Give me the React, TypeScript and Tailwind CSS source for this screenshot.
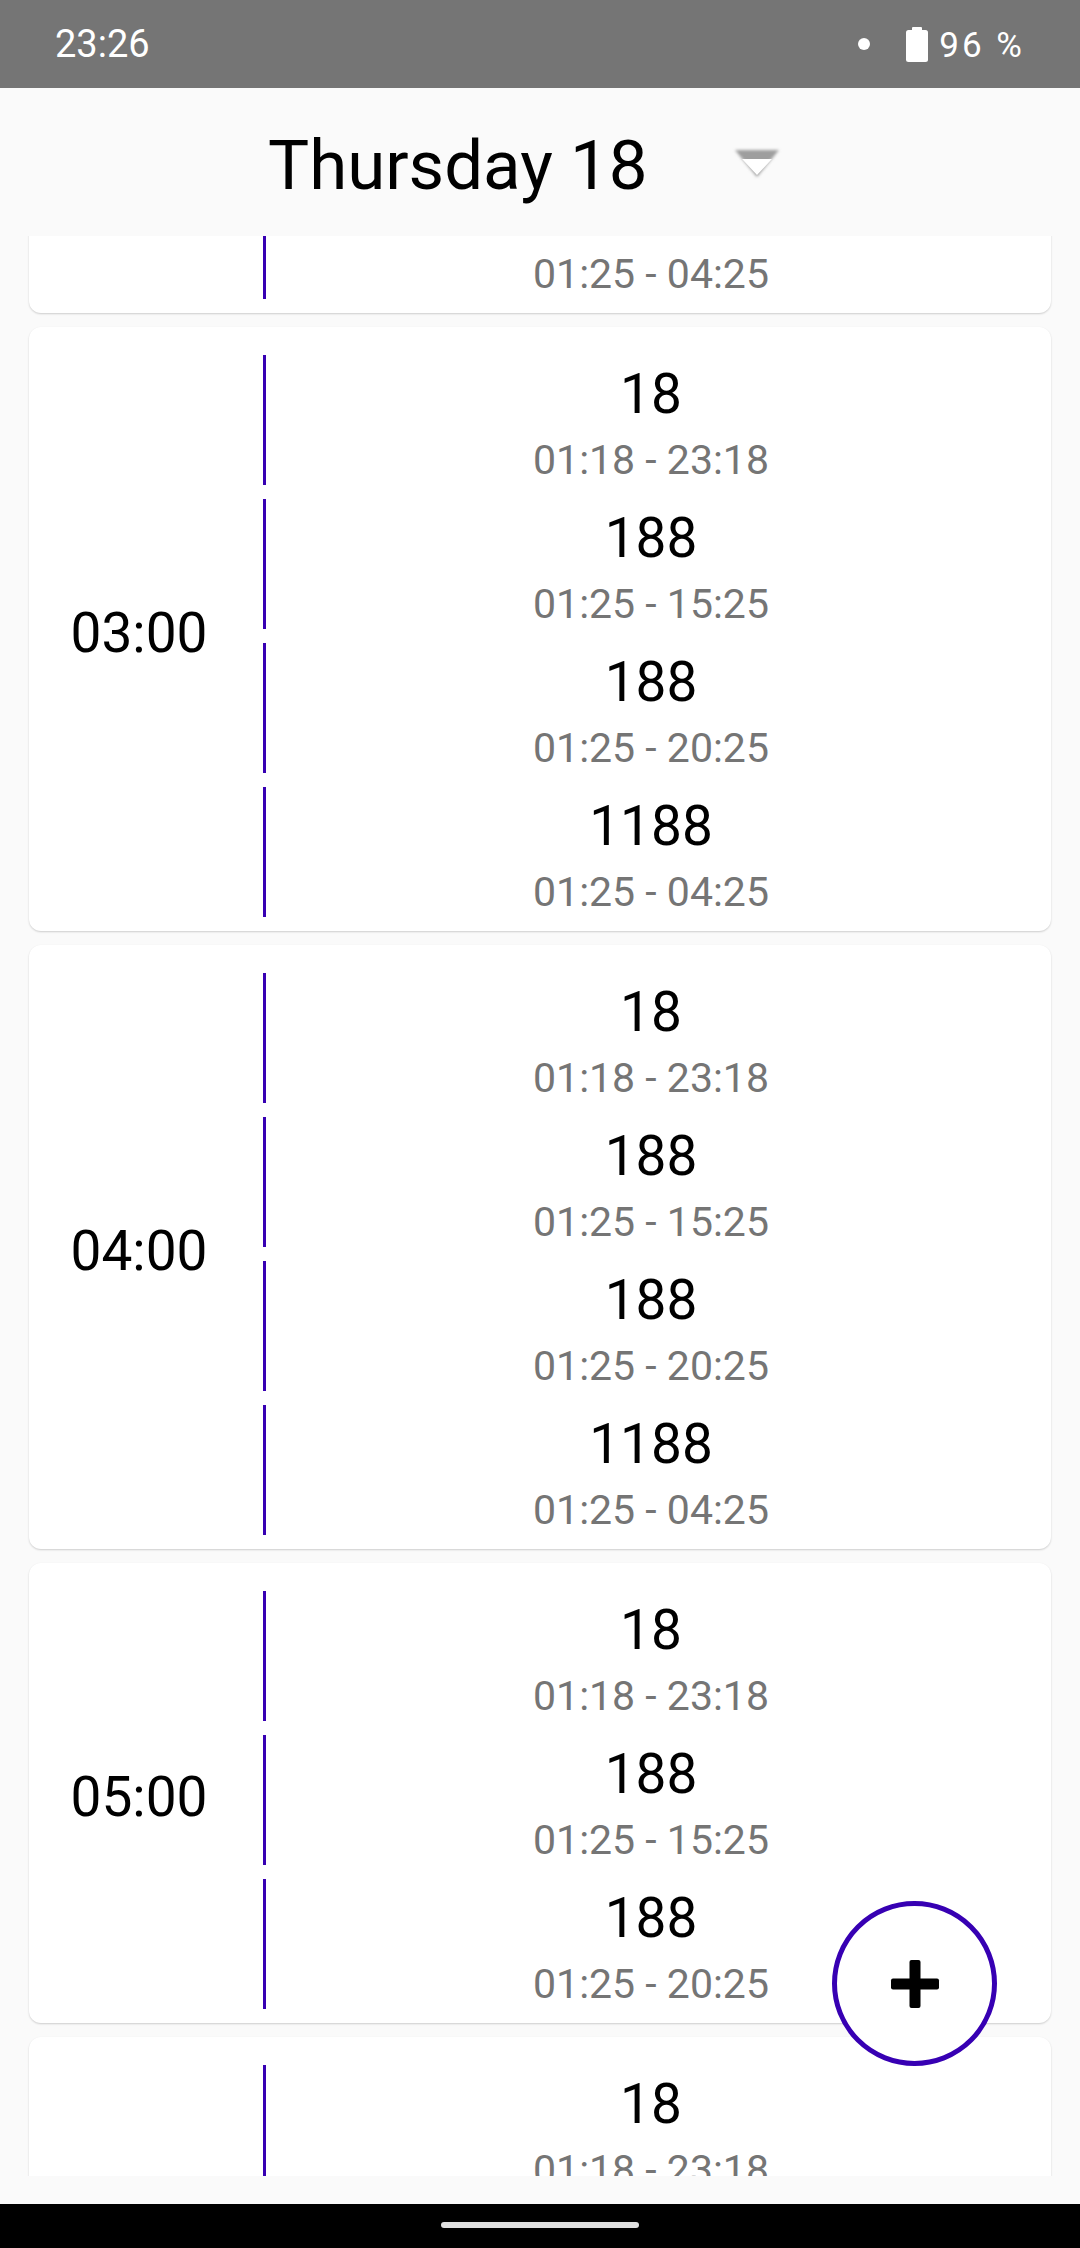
import React from 'react';

interface Slot {
  title: string;
  range: string;
}

const slots: Slot[] = [
  { title: '18', range: '01:18 - 23:18' },
  { title: '188', range: '01:25 - 15:25' },
  { title: '188', range: '01:25 - 20:25' },
  { title: '1188', range: '01:25 - 04:25' },
];

const hours = [
  { label: '02:00', items: slots },
  { label: '03:00', items: slots },
  { label: '04:00', items: slots },
  { label: '05:00', items: slots.slice(0, 3) },
  { label: '06:00', items: slots },
];

function StatusBar() {
  return (
    <div className="h-[88px] shrink-0 bg-[#757575] flex items-center pl-[55px] pr-[55px] text-white">
      <span className="text-[38px] leading-none">23:26</span>
      <div className="ml-auto flex items-center">
        <div className="w-[12px] h-[12px] rounded-full bg-white" />
        <svg width="22" height="35" viewBox="0 0 22 35" className="ml-[36px]">
          <rect x="6" y="0" width="10" height="4" rx="1" fill="#fff" />
          <rect x="0" y="3" width="22" height="32" rx="2.5" fill="#fff" />
        </svg>
        <span className="ml-[11px] mt-[2px] text-[35px] leading-none tracking-[3px]">96 %</span>
      </div>
    </div>
  );
}

function DropArrow() {
  return (
    <svg width="60" height="40" viewBox="0 0 60 40">
      <defs>
        <filter id="soft" x="-20%" y="-20%" width="140%" height="140%">
          <feGaussianBlur stdDeviation="1.8" />
        </filter>
      </defs>
      <polygon points="8,5 52,5 30,32" fill="#9e9e9e" filter="url(#soft)" />
      <polygon points="15,14 45,14 30,30" fill="#ffffff" />
    </svg>
  );
}

function HourCard({ label, items }: { label: string; items: Slot[] }) {
  return (
    <div className="flex shrink-0 bg-white rounded-[12px] shadow-[0_1px_2px_rgba(0,0,0,0.18)] pr-[15px]">
      <div className="w-[234px] pr-[14px] flex items-center justify-center">
        <span className="mt-[8px] text-[55px] leading-none text-black">{label}</span>
      </div>
      <div className="flex-1 flex flex-col pt-[14px] pb-[14px]">
        {items.map((s, i) => (
          <div
            key={i}
            className="mt-[14px] h-[130px] border-l-[3px] border-[#3700B3] flex flex-col items-center"
          >
            <span className="mt-[12px] text-[55px] leading-none text-black">{s.title}</span>
            <span className="mt-[18px] text-[41px] leading-none text-[#757575]">{s.range}</span>
          </div>
        ))}
      </div>
    </div>
  );
}

export default function App() {
  return (
    <div className="relative w-[1080px] h-[2248px] bg-[#fafafa] flex flex-col overflow-hidden font-['Roboto',sans-serif]">
      <StatusBar />

      {/* day spinner */}
      <div className="h-[148px] shrink-0 flex items-start pl-[268px] pt-[43px]">
        <span className="text-[69px] leading-none text-black">Thursday 18</span>
        <div className="ml-[80px] mt-[14px]">
          <DropArrow />
        </div>
      </div>

      {/* scrolled list */}
      <div className="h-[1940px] shrink-0 overflow-hidden">
        <div className="flex flex-col gap-[14px] px-[29px] mt-[-527px]">
          {hours.map((h) => (
            <HourCard key={h.label} label={h.label} items={h.items} />
          ))}
        </div>
      </div>

      <div className="h-[28px] shrink-0" />

      {/* nav bar */}
      <div className="h-[44px] shrink-0 bg-black flex items-center justify-center">
        <div className="w-[198px] h-[6px] rounded-full bg-[#e0e0e0] mt-[-2px]" />
      </div>

      {/* add button */}
      <button className="absolute left-[832px] top-[1901px] w-[165px] h-[165px] rounded-full border-[5px] border-[#3700B3] bg-white flex items-center justify-center">
        <svg width="50" height="50" viewBox="0 0 50 50">
          <rect x="1" y="19.5" width="48" height="11" rx="2" fill="#000" />
          <rect x="19.5" y="1" width="11" height="48" rx="2" fill="#000" />
        </svg>
      </button>
    </div>
  );
}
